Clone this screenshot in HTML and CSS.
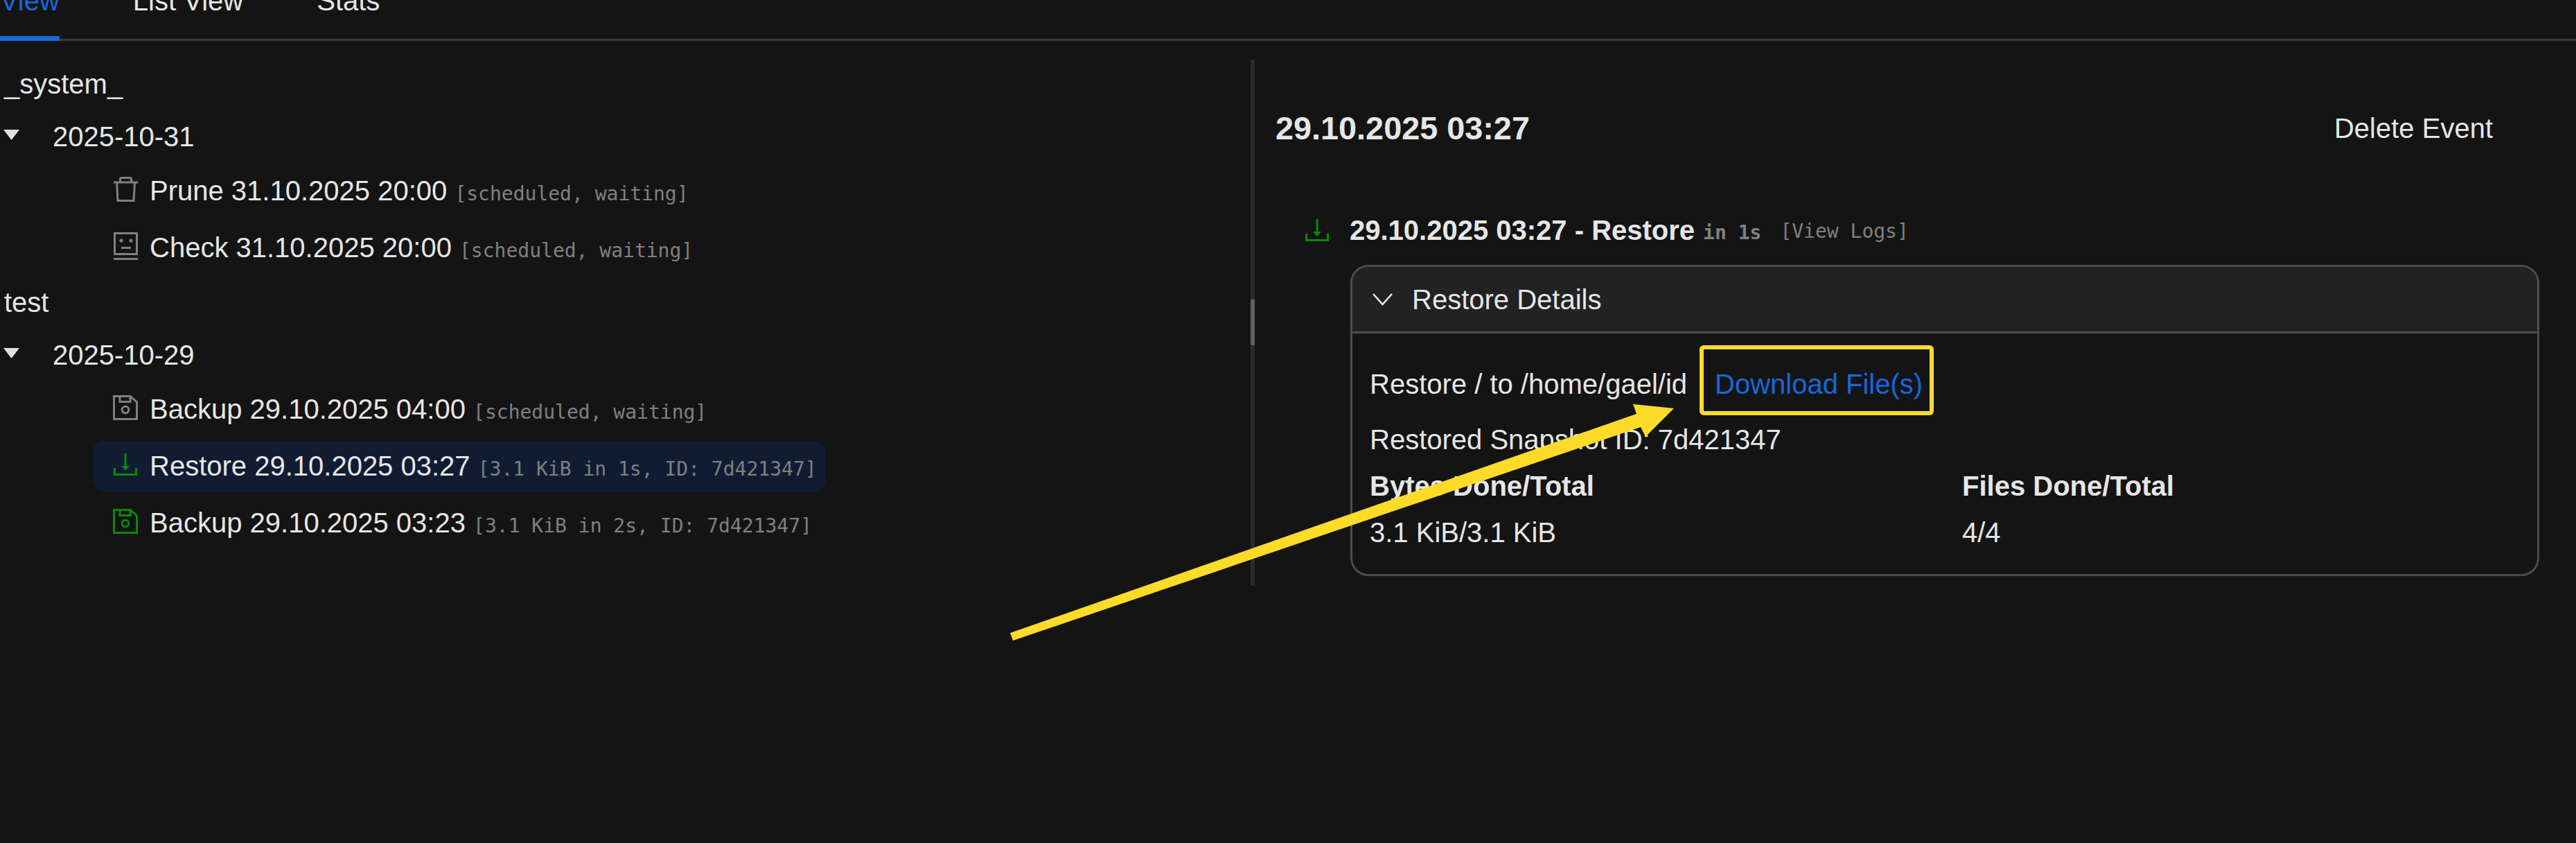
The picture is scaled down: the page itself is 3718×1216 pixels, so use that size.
FILE: index.html
```html
<!DOCTYPE html>
<html lang="en">
<head>
<meta charset="utf-8">
<title>Backups</title>
<link rel="stylesheet" href="styles.css">
</head>
<body>
<nav class="tabs">
  <div class="tab active">Tree View</div>
  <div class="tab">List View</div>
  <div class="tab">Stats</div>
</nav>
<main class="split">
  <section class="tree">
    <div class="head">_system_</div>
    <div class="head date"><svg class="caret" viewBox="0 0 23 15"><path d="M0 0H23L11.5 15Z"/></svg>2025-10-31</div>
    <ul class="items">
      <li class="item"><span class="slot"><svg class="icon grey" width="35" height="36" viewBox="0 0 35 36"><path d="M0 8H35M9.5 8V3.5Q9.5 1.5 11.5 1.5H23.5Q25.5 1.5 25.5 3.5V8M4.5 8L6 34.5H29L30.5 8"/></svg></span><span class="name">Prune 31.10.2025 20:00 <span class="meta">[scheduled, waiting]</span></span></li>
      <li class="item"><span class="slot"><svg class="icon grey" width="35" height="40" viewBox="0 0 35 40"><path d="M1.5 1.5H33.5V31.5H1.5ZM11 22.5H25M0 38.5H35"/><circle class="dot" cx="11" cy="12" r="2.6"/><circle class="dot" cx="25" cy="12" r="2.6"/></svg></span><span class="name">Check 31.10.2025 20:00 <span class="meta">[scheduled, waiting]</span></span></li>
    </ul>
    <div class="head">test</div>
    <div class="head date"><svg class="caret" viewBox="0 0 23 15"><path d="M0 0H23L11.5 15Z"/></svg>2025-10-29</div>
    <ul class="items">
      <li class="item"><span class="slot"><svg class="icon grey" width="36" height="36" viewBox="0 0 36 36"><path d="M1.5 1.5H25L34.5 10V34.5H1.5ZM10 1.5V9.5H25V1.5"/><circle cx="18" cy="21" r="4.8"/></svg></span><span class="name">Backup 29.10.2025 04:00 <span class="meta">[scheduled, waiting]</span></span></li>
      <li class="item selected"><span class="slot"><svg class="icon green" width="34" height="32" viewBox="0 0 34 32"><path d="M17 0V20M1.5 21V30.5H32.5V21"/><path class="fill" d="M11 18H23L17 25Z"/></svg></span><span class="name">Restore 29.10.2025 03:27 <span class="meta">[3.1 KiB in 1s, ID: 7d421347]</span></span></li>
      <li class="item"><span class="slot"><svg class="icon green" width="36" height="36" viewBox="0 0 36 36"><path d="M1.5 1.5H25L34.5 10V34.5H1.5ZM10 1.5V9.5H25V1.5"/><circle cx="18" cy="21" r="4.8"/></svg></span><span class="name">Backup 29.10.2025 03:23 <span class="meta">[3.1 KiB in 2s, ID: 7d421347]</span></span></li>
    </ul>
  </section>
  <div class="splitter"><div class="handle"></div></div>
  <section class="detail">
    <header class="detail-head">
      <h3 class="detail-title">29.10.2025 03:27</h3>
      <button class="delete">Delete Event</button>
    </header>
    <article class="event">
      <div class="event-row">
        <svg class="icon green" width="34" height="32" viewBox="0 0 34 32"><path d="M17 0V20M1.5 21V30.5H32.5V21"/><path class="fill" d="M11 18H23L17 25Z"/></svg>
        <strong class="event-title">29.10.2025 03:27 - Restore</strong>
        <strong class="meta">in 1s</strong>
        <span class="meta logs">[View Logs]</span>
      </div>
      <div class="box">
        <div class="box-head">
          <svg class="chevron" width="29" height="18" viewBox="0 0 29 18"><path d="M1 1L14.5 16L28 1"/></svg>
          Restore Details
        </div>
        <div class="box-body">
          <div class="line first"><span>Restore / to /home/gael/id</span><a class="link">Download File(s)</a></div>
          <div class="line second">Restored Snapshot ID: 7d421347</div>
          <div class="stats">
            <b>Bytes Done/Total</b><b>Files Done/Total</b>
            <span>3.1 KiB/3.1 KiB</span><span>4/4</span>
          </div>
        </div>
      </div>
    </article>
  </section>
</main>
<svg class="arrow" width="3718" height="1216" viewBox="0 0 3718 1216"><polygon points="1458,913 2362,597 2357,583 2416,589 2375,630 2368,616 1462,924"/></svg>
</body>
</html>
```

FILE: styles.css
```css
* { box-sizing: border-box; }
html, body { margin: 0; height: 100%; background: #141414; }
body {
  position: relative;
  overflow: hidden;
  color: #e6e6e6;
  font: 40px/60px "Liberation Sans", Arial, sans-serif;
}

.tabs {
  display: flex;
  gap: 106px;
  height: 88px;
  margin: -29px 0 0 -92px;
  border-bottom: 3px solid #3b3b3b;
}
.tab { height: 88px; flex: none; }
.tab.active { color: #1668dc; border-bottom: 7px solid #1668dc; }

.split { display: flex; align-items: flex-start; }

.tree { width: 1805px; flex: none; padding: 22px 0 0 6px; }
.head { height: 77px; line-height: 80px; }
.date { display: flex; align-items: center; }
.caret { width: 23px; height: 15px; margin: 0 48px 4px -1px; fill: #e0e0e0; flex: none; }
.items { list-style: none; margin: 4px 0 1px 128px; padding: 0; display: flex; flex-direction: column; align-items: flex-start; gap: 8px; }
.item {
  display: flex;
  align-items: center;
  gap: 18px;
  height: 74px;
  padding: 0 13px 6px 30px;
  border-radius: 16px;
  white-space: nowrap;
}
.item.selected { background: #111c32; }
.slot { display: flex; justify-content: center; width: 34px; flex: none; }
.name { display: block; line-height: 68px; padding-top: 3px; }
.meta { color: #808080; font: 28px "DejaVu Sans Mono", "Liberation Mono", monospace; }
strong.meta { font-weight: 700; }

.icon { flex: none; fill: none; stroke-width: 3; }
.icon.grey { stroke: #808080; }
.icon.green { stroke: #078a07; }
.icon .fill { fill: #078a07; stroke: none; }
.icon .dot { fill: #808080; stroke: none; }

.splitter { width: 6px; height: 759px; margin-top: 27px; padding-top: 346px; background: #2b2b2b; flex: none; }
.handle { height: 66px; background: #5f5f5f; }

.detail { flex: 1; padding: 76px 53px 0 30px; }
.detail-head { display: flex; justify-content: space-between; align-items: center; height: 100px; }
.detail-title { margin: 0; font-size: 46.8px; font-weight: 700; }
.delete {
  padding: 0 67px 0 66px;
  border: 0;
  background: none;
  color: inherit;
  font: inherit;
}

.event { margin: 67px 0 0 43px; }
.event-row { display: flex; align-items: center; height: 60px; white-space: pre; }
.event-title { margin-left: 30px; }
.event-row .meta { margin-left: 12px; margin-top: 6px; }
.event-row .logs { margin-left: 27px; margin-top: 2px; font-weight: 400; }

.box { margin: 20px 0 0 65px; height: 449px; border: 3px solid #4c4c4c; border-radius: 26px; overflow: hidden; }
.box-head { display: flex; align-items: center; gap: 28px; height: 96px; padding: 0 0 0 29px; background: #222; border-bottom: 3px solid #4c4c4c; }
.chevron { fill: none; stroke: #e6e6e6; stroke-width: 2.6; flex: none; }
.box-body { padding: 26px 25px 0; }
.line.first { display: flex; align-items: center; gap: 40px; height: 94px; line-height: 62px; }
.line.second { height: 66px; line-height: 66px; }
.link { position: relative; color: #1668dc; line-height: 60px; }
.link::after {
  content: "";
  position: absolute;
  inset: -26px -16px -15px -22px;
  border: 6px solid #fedb28;
  border-radius: 6px;
}
.stats { display: grid; grid-template-columns: 1fr 1fr; grid-template-rows: 67px 67px; column-gap: 50px; line-height: 68px; }

.arrow { position: absolute; left: 0; top: 0; fill: #fedb28; }
```
